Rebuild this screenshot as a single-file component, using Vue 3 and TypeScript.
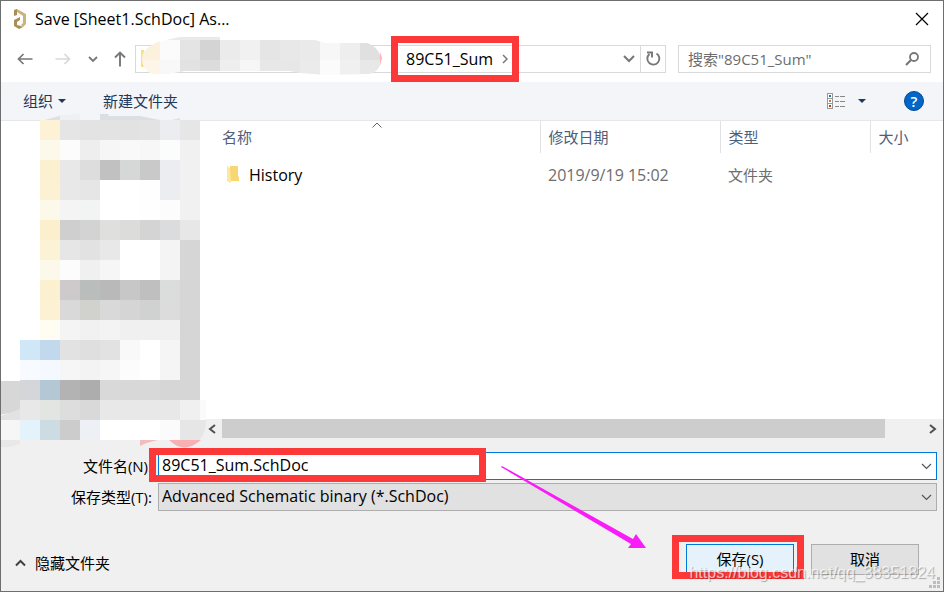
<script setup lang="ts">
import { ref } from 'vue'

interface FileRow {
  name: string
  modified: string
  kind: string
}

interface Cell {
  x: number
  y: number
  fill: string
}

const fileName = ref('89C51_Sum.SchDoc')
const fileType = ref('Advanced Schematic binary (*.SchDoc)')
const query = ref('')

const files: FileRow[] = [{ name: 'History', modified: '2019/9/19 15:02', kind: '文件夹' }]

const toCells = (rows: string[], left: number, top: number): Cell[] =>
  rows.flatMap((row, r) =>
    row.split(' ').flatMap((value, c) => {
      if (value === '-') return []
      const fill = value.length === 2 ? `#${value}${value}${value}` : `#${value}`
      return [{ x: left + c * 20, y: top + r * 20, fill }]
    }),
  )

// Pixelated cover over the folder tree, 20px cells; two digits mean a grey level.
const treeCells = toCells(
  [
    '- - fdf2d5 e5 e3 e3 e2 e3 ecedf0 e6',
    '- - fcf9ea fc ee f6 f9 f7 fafdfc f1',
    '- - fbf0cf e8 dd c1 d5d8d7 c9 ecedf0 f1',
    '- - fcf2d3 e8 e6 ff ff fe ecedf0 f1',
    '- - fdf9ea f4 f2f4f4 ff ff fe fc f1',
    '- - fbefcd cf d3 dfdfdd dcdcda d4 dadcde e7',
    '- - fcf2d5 e6 e2 e8 ff ff f4 d6',
    '- - fcf9ea fc f0 f6 ff ff f4 d6',
    '- - fbf0cf cec9ca b9bdbb b9 c7 bf dadddc d6',
    '- - fcf2d3 d9 d1d1ce d9 d5 cfd2d1 dc d6',
    '- - fffdf1 f4 f1 f3 f0 f0 f0 d6',
    '- cfe7f7 c1d8ed e2 df e2 f9 ff f5 d6',
    '- f7fbff f3f9fe f6 f3 f6 fc ff f5 d6',
    '- d4d6d9 b4c7d5 b3 ad d9 d8 d8 d6 d6',
    '- e8 e3e5e3 dd d9 e8 e8 e8 e8 f0',
    'f6 e3f2fb cddce3 cc edf0f4 ff ff ff fb e6',
  ],
  0,
  10,
)

const pathCells = toCells(
  ['fbf1dc fb e4 d4 eb f1 e5 e8 ea f7 ee e0', 'fdf5e8 f8 e2 dc ee f6 e7 e7 eb fb f0 e8'],
  5,
  4,
)
</script>

<template>
  <main class="dialog">
    <header class="title">
      <svg class="logo" width="14" height="20" viewBox="0 0 14 20">
        <path d="M1 1l3-1v6l-3 1z" fill="#a88d55" />
        <path d="M4 0l9 5v10l-3 3-2-2 2-2V7L4 3z" fill="#c9b47c" />
        <path d="M1 11l6-3v3l-3 2v3l4 1 2 1-4 2-5-3z" fill="#a98f55" />
      </svg>
      <h1>Save [Sheet1.SchDoc] As...</h1>
      <button class="icon close" aria-label="Close">
        <svg width="14" height="14" viewBox="0 0 14 14"><path d="M1 1l12 12M13 1L1 13" stroke="#000" stroke-width="1.2" /></svg>
      </button>
    </header>

    <nav class="nav">
      <div class="arrows">
        <button class="icon" aria-label="Back">
          <svg width="16" height="14" viewBox="0 0 16 14"><path d="M15.500 7H1.500M6.500 2l-5 5 5 5" fill="none" stroke="#777" stroke-width="1.700" /></svg>
        </button>
        <button class="icon" aria-label="Forward">
          <svg width="16" height="14" viewBox="0 0 16 14"><path d="M.5 7h14M9.500 2l5 5-5 5" fill="none" stroke="#d9d9d9" stroke-width="1.700" /></svg>
        </button>
        <button class="icon recent" aria-label="Recent">
          <svg width="10" height="8" viewBox="0 0 10 8"><path d="M1 2l4 4 4-4" fill="none" stroke="#777" stroke-width="1.800" /></svg>
        </button>
        <button class="icon" aria-label="Up">
          <svg width="14" height="16" viewBox="0 0 14 16"><path d="M7 15.500V1.500M2 6.500l5-5 5 5" fill="none" stroke="#777" stroke-width="1.900" /></svg>
        </button>
      </div>
      <div class="address">
        <svg class="smudge" width="260" height="45" viewBox="0 0 260 45" aria-hidden="true">
          <clipPath id="pathShape">
            <path d="M7 22C7 16 13 10 23 6L40 2 45 1H85L90 4H180L190 7H232C241 10 246 17 246 24S241 38 232 38L190 39 165 37 155 35H50L33 38H18C10 36 7 29 7 22Z" />
          </clipPath>
          <rect x="6" y="14" width="3" height="17" fill="#fbdf85" />
          <path d="M245 16l2 6-2 8z" fill="#ffb3b6" />
          <g clip-path="url(#pathShape)" shape-rendering="crispEdges">
            <rect v-for="c in pathCells" :key="`${c.x}-${c.y}`" :x="c.x" :y="c.y" width="20" height="20" :fill="c.fill" />
            <rect x="25" y="0" width="60" height="4" fill="#eaeaea" />
          </g>
        </svg>
        <button class="crumb">
          89C51_Sum
          <svg width="6" height="10" viewBox="0 0 6 10"><path d="M1 1l4 4-4 4" fill="none" stroke="#777" stroke-width="1.500" /></svg>
          <span class="mark" />
        </button>
        <button class="icon drop" aria-label="Previous locations">
          <svg width="12" height="8" viewBox="0 0 12 8"><path d="M1 1l5 5 5-5" fill="none" stroke="#777" stroke-width="2" /></svg>
        </button>
        <button class="icon refresh" aria-label="Refresh">
          <svg width="16" height="16" viewBox="0 0 16 16">
            <path d="M11.500 2.500A6 6 0 1 1 4.500 3" fill="none" stroke="#777" stroke-width="1.900" />
            <path d="M2 1.500h5v5" fill="none" stroke="#777" stroke-width="1.900" />
          </svg>
        </button>
      </div>
      <div class="search">
        <input v-model="query" type="search" aria-label="Search" placeholder='搜索"89C51_Sum"' />
        <svg width="14" height="14" viewBox="0 0 14 14">
          <circle cx="9" cy="5" r="4" fill="none" stroke="#777" stroke-width="1.800" />
          <path d="M6 8l-5 5" stroke="#777" stroke-width="2.200" />
        </svg>
      </div>
    </nav>

    <div class="toolbar">
      <button>
        组织
        <svg width="8" height="4" viewBox="0 0 8 4"><path d="M0 0h8L4 4z" fill="#1e395b" /></svg>
      </button>
      <button>新建文件夹</button>
      <button class="view" aria-label="View">
        <svg width="19" height="17" viewBox="0 0 19 17" shape-rendering="crispEdges">
          <path d="M.5.500h5v15h-5zM.5 5.500h5M.5 10.500h5" fill="#fff" stroke="#999" />
          <path d="M8 3.500h4m1 0h5M8 8.500h4m1 0h5M8 13.500h4m1 0h5" stroke="#888" />
          <path d="M2 2h2v2H2z" fill="#2f6fa8" />
          <path d="M2 7h2v2H2z" fill="#a38a36" />
          <path d="M2 12h2v2H2z" fill="#c2321d" />
        </svg>
        <svg width="8" height="4" viewBox="0 0 8 4"><path d="M0 0h8L4 4z" fill="#1e395b" /></svg>
      </button>
      <button class="help" aria-label="Help">?</button>
    </div>

    <section class="browser">
      <aside class="tree">
        <svg class="tree-cover" width="210" height="340" viewBox="0 0 210 340" aria-hidden="true">
          <path d="M45 10l15-5 20-1v6z" fill="#eef0f3" />
          <path d="M45 10l7-2 8-2v4z" fill="#dce1e6" />
          <path d="M100 10V4h8l1 2h31l10 2 10 2z" fill="#d9dfe5" />
          <path d="M172 10l8-2v2z" fill="#dce1e6" />
          <path d="M0 271h20v30l-20 4z" fill="#d7d7d7" />
          <path d="M0 306l20-7v11H0z" fill="#e2e2e2" />
          <path d="M0 330h20v4l-10 3H0z" fill="#e8e8e8" />
          <path d="M200 290h6v20h-6z" fill="#fbfbfb" />
          <path d="M200 310h6q0 12-6 20z" fill="#e6e6e6" />
          <path d="M140 330h18q-10 2-18 6z" fill="#f1bcbe" />
          <path d="M169 330h32q-17 15-32 0z" fill="#f8b1b3" />
          <rect v-for="c in treeCells" :key="`${c.x}-${c.y}`" :x="c.x" :y="c.y" width="20" height="20" :fill="c.fill" shape-rendering="crispEdges" />
        </svg>
      </aside>
      <div class="listing">
        <div class="files">
          <svg class="sort" width="10" height="6" viewBox="0 0 10 6"><path d="M.5 5.500L5 1l4.500 4.500" fill="none" stroke="#666" /></svg>
          <table>
            <thead>
              <tr>
                <th class="name">名称</th>
                <th class="date">修改日期</th>
                <th class="kind">类型</th>
                <th>大小</th>
              </tr>
            </thead>
            <tbody>
              <tr v-for="f in files" :key="f.name">
                <td class="name">
                  <span class="file">
                    <svg width="13" height="18" viewBox="0 0 13 18">
                      <path d="M3 0h8v10l1 1v4H3z" fill="#f7d774" />
                      <path d="M0 0l3 2 1 14-1 1-3-2z" fill="#ffe79b" />
                    </svg>
                    {{ f.name }}
                  </span>
                </td>
                <td class="when">{{ f.modified }}</td>
                <td>{{ f.kind }}</td>
                <td></td>
              </tr>
            </tbody>
          </table>
        </div>
        <div class="scroll">
          <button class="icon" aria-label="Scroll left">
            <svg width="8" height="10" viewBox="0 0 8 10"><path d="M7 1L2 5l5 4" fill="none" stroke="#505050" stroke-width="2" /></svg>
          </button>
          <div class="track"><div class="thumb" /></div>
          <button class="icon" aria-label="Scroll right">
            <svg width="8" height="10" viewBox="0 0 8 10"><path d="M1 1l5 4-5 4" fill="none" stroke="#505050" stroke-width="2" /></svg>
          </button>
        </div>
      </div>
    </section>

    <form class="form" @submit.prevent>
      <div class="field">
        <label for="file-name">文件名(N):</label>
        <div class="box active">
          <input id="file-name" v-model="fileName" type="text" />
          <svg class="chevron" width="11" height="7" viewBox="0 0 11 7"><path d="M1 1l4.500 4.500L10 1" fill="none" stroke="#555" stroke-width="1.200" /></svg>
          <span class="mark" />
        </div>
      </div>
      <div class="field">
        <label for="file-type">保存类型(T):</label>
        <div class="box">
          <select id="file-type" v-model="fileType">
            <option>Advanced Schematic binary (*.SchDoc)</option>
          </select>
          <svg class="chevron" width="11" height="7" viewBox="0 0 11 7"><path d="M1 1l4.500 4.500L10 1" fill="none" stroke="#555" stroke-width="1.200" /></svg>
        </div>
      </div>
      <div class="actions">
        <button type="button" class="hide">
          <svg width="11" height="8" viewBox="0 0 11 8"><path d="M1 6.500L5.500 2 10 6.500" fill="none" stroke="#404040" stroke-width="2" /></svg>
          隐藏文件夹
        </button>
        <button type="submit" class="push primary">保存(S)<span class="mark" /></button>
        <button type="button" class="push">取消</button>
      </div>
      <svg class="arrow" width="146" height="86" viewBox="0 0 146 86" aria-hidden="true">
        <path d="M1 1L2 0 133 73 136 68 146 82H128L131 78 1 1Z" fill="#f91cf9" />
      </svg>
      <svg class="grip" width="12" height="12" viewBox="0 0 12 12" shape-rendering="crispEdges">
        <path d="M9 0h3v3H9zM5 4h3v3H5zM9 4h3v3H9zM1 8h3v3H1zM5 8h3v3H5zM9 8h3v3H9z" fill="#bdbdbd" />
      </svg>
      <span class="watermark">https://blog.csdn.net/qq_38351824</span>
    </form>
  </main>
</template>

<style>
body {
  margin: 0;
}
</style>

<style scoped>
* {
  box-sizing: border-box;
}

.dialog {
  display: flex;
  flex-direction: column;
  min-height: 100vh;
  border: 1px solid #6e6e6e;
  background: #fff;
  color: #000;
  font: 15px/20px 'Open Sans', 'Noto Sans CJK SC', sans-serif;
  overflow: hidden;
}

button,
input,
select {
  margin: 0;
  padding: 0;
  border: 0;
  background: none;
  color: inherit;
  font: inherit;
}

svg {
  display: block;
  flex: none;
}

.icon {
  display: flex;
  align-items: center;
  justify-content: center;
}

.title {
  display: flex;
  align-items: center;
  height: 36px;
  padding: 0 14px 0 12px;
}

h1 {
  flex: 1;
  margin: 0 0 0 8px;
  font: inherit;
}

h1,
.crumb,
.file,
.when,
.box input,
.box select {
  font-size: 16px;
}

.nav {
  display: flex;
  align-items: center;
  height: 45px;
  padding: 0 12px 2px 16px;
}

.arrows {
  display: flex;
  align-items: center;
  gap: 22px;
  width: 118px;
}

.arrows .recent {
  margin: 0 -7px 0 -5px;
}

.address {
  position: relative;
  display: flex;
  flex: 529;
  height: 28px;
  border: 1px solid #d9d9d9;
}

.smudge {
  position: absolute;
  left: -1px;
  top: -10px;
}

.crumb {
  position: relative;
  display: flex;
  align-items: center;
  gap: 9px;
  margin: 0 auto 0 262px;
  padding: 0 8px;
}

.mark {
  position: absolute;
  border: 7px solid #fd3838;
  pointer-events: none;
}

.crumb .mark {
  inset: -10px -3px -10px -7px;
}

.drop {
  width: 22px;
}

.refresh {
  width: 25px;
  border-left: 1px solid #d9d9d9;
}

.search {
  display: flex;
  align-items: center;
  flex: 231;
  min-width: 0;
  height: 28px;
  margin-left: 12px;
  padding: 0 11px 0 9px;
  border: 1px solid #d9d9d9;
}

.search input {
  flex: 1;
  min-width: 0;
  outline: 0;
}

.search input::placeholder {
  color: #6d6d6d;
  opacity: 1;
}

.toolbar {
  display: flex;
  align-items: center;
  height: 39px;
  padding: 0 19px 0 22px;
  border-bottom: 1px solid #e6e7ea;
  background: #f4f5f8;
  color: #1e395b;
}

.toolbar button {
  display: flex;
  align-items: center;
  gap: 5px;
  margin-right: 37px;
}

.toolbar .view {
  gap: 12px;
  margin: 0 38px 0 auto;
}

.toolbar .help {
  justify-content: center;
  width: 20px;
  height: 20px;
  margin: 0;
  border: 1px solid #004a91;
  border-radius: 50%;
  background: #0067c9;
  color: #fff;
  font-weight: 600;
}

.browser {
  display: flex;
  flex: 1;
}

.tree {
  position: relative;
  flex: none;
  width: 201px;
}

.tree-cover {
  position: absolute;
  left: -1px;
  top: -11px;
  z-index: 1;
}

.listing {
  display: flex;
  flex: 1;
  flex-direction: column;
  min-width: 0;
}

.files {
  position: relative;
  flex: 1;
}

.sort {
  position: absolute;
  left: 170px;
  top: 1px;
}

table {
  width: 100%;
  border-collapse: collapse;
  table-layout: fixed;
}

th {
  height: 32px;
  padding: 0 8px;
  border-right: 1px solid #e2e2e5;
  color: #4c607a;
  font-weight: 400;
  text-align: left;
}

th:last-child {
  border: 0;
}

th.name,
td.name {
  width: 338px;
  padding-left: 20px;
}

.date {
  width: 180px;
}

.kind {
  width: 150px;
}

td {
  height: 44px;
  padding: 0 8px;
  color: #6d6d6d;
}

td.name {
  color: #000;
}

.file {
  display: flex;
  align-items: center;
  gap: 9px;
  padding-left: 5px;
}

.scroll {
  display: flex;
  height: 19px;
  background: #f0f0f0;
}

.scroll .icon {
  width: 20px;
}

.track {
  flex: 1;
  display: flex;
  padding-right: 3px;
}

.thumb {
  width: 95%;
  background: #cdcdcd;
}

.form {
  position: relative;
  display: flex;
  flex-direction: column;
  gap: 3px;
  padding: 14px 6px 16px 12px;
  background: #f0f0f0;
}

.field {
  display: flex;
  align-items: center;
}

.field label {
  width: 139px;
  margin-right: 6px;
  text-align: right;
}

.box {
  position: relative;
  display: flex;
  align-items: center;
  flex: 1;
  height: 28px;
  border: 1px solid #adadad;
  background: #e1e1e1;
}

.active {
  border-color: #0078d7;
  background: #fff;
}

.box input,
.box select {
  width: 100%;
  height: 100%;
  padding: 0 24px 2px 3px;
  outline: 0;
  appearance: none;
}

.chevron {
  position: absolute;
  right: 4px;
  pointer-events: none;
}

.box .mark {
  left: -10px;
  top: -5px;
  width: 337px;
  height: 34px;
}

.actions {
  display: flex;
  align-items: center;
  gap: 17px;
  padding: 30px 18px 0 0;
}

.hide {
  display: flex;
  align-items: center;
  gap: 9px;
  margin: 6px auto 0 2px;
}

.push {
  position: relative;
  width: 108px;
  height: 31px;
  padding-bottom: 2px;
  border: 1px solid #adadad;
  background: #e1e1e1;
}

.primary {
  border-color: #0078d7;
  background: #e5f1fb;
}

.primary .mark {
  inset: -10px -11px -5px -15px;
}

.arrow {
  position: absolute;
  right: 297px;
  top: 28px;
}

.grip {
  position: absolute;
  right: 3px;
  bottom: 2px;
}

.watermark {
  position: absolute;
  right: 8px;
  bottom: 8px;
  color: rgba(255, 255, 255, 0.7);
  font: 16px/20px 'Liberation Sans', sans-serif;
  text-shadow: 1px 1px 1px rgba(0, 0, 0, 0.3);
  pointer-events: none;
}
</style>
